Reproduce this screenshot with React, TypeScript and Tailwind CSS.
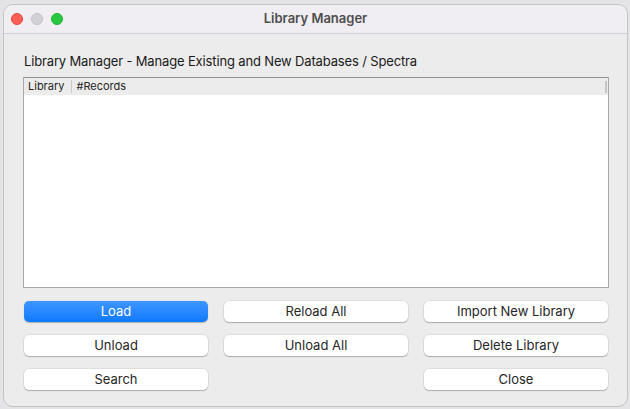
import React from "react";

const sans = { fontFamily: "Inter, 'Liberation Sans', sans-serif" };

function MacButton({ label, primary }: { label: string; primary?: boolean }) {
  if (primary) {
    return (
      <button className="h-[21px] rounded-[5px] bg-gradient-to-b from-[#3d95ff] to-[#0a7aff] text-[13px] text-white leading-none shadow-[0_0.5px_1px_rgba(0,0,0,0.25)]">
        {label}
      </button>
    );
  }
  return (
    <button className="h-[21px] rounded-[5px] bg-white text-[13px] text-[#262626] leading-none shadow-[0_0_0_0.5px_rgba(0,0,0,0.12),0_1px_1px_rgba(0,0,0,0.22)]">
      {label}
    </button>
  );
}

export default function App() {
  return (
    <div className="w-[630px] h-[409px] bg-[#e4e4e6] overflow-hidden" style={sans}>
      <div className="ml-[3px] mt-[4px] w-[625px] h-[403px] rounded-[10px] overflow-hidden bg-[#ececec] border border-[#c4c4c4] flex flex-col">
        <div className="h-[29px] shrink-0 bg-[#f0eef3] border-b border-[#d2d0d6] flex items-center relative">
          <div className="flex gap-[8px] pl-[7px]">
            <span className="w-[12px] h-[12px] rounded-full bg-[#ff5f57] border border-[#e2463f]" />
            <span className="w-[12px] h-[12px] rounded-full bg-[#d2d1d6] border border-[#c1c0c5]" />
            <span className="w-[12px] h-[12px] rounded-full bg-[#28c840] border border-[#1fb233]" />
          </div>
          <div className="absolute inset-0 flex items-center justify-center text-[13px] font-semibold text-[#4d4d4d]">
            Library Manager
          </div>
        </div>
        <div className="pl-[19px] pr-[18px] pt-[19px]">
          <div className="text-[13px] text-[#1a1a1a] leading-[16px] pl-px tracking-[-0.15px]">
            Library Manager - Manage Existing and New Databases / Spectra
          </div>
          <div className="mt-[8px] h-[211px] border border-[#a9a9a9] border-t-[#8e8e8e] bg-white flex flex-col">
            <div className="h-[17px] bg-[#ececec] flex items-center text-[11px] text-[#262626]">
              <span className="pl-[4px] pr-[7px]">Library</span>
              <span className="w-px h-[13px] bg-[#c9c9c9]" />
              <span className="pl-[4px]">#Records</span>
              <span className="ml-auto mr-[1px] w-[2px] h-[12px] bg-[#c4c4c4]" />
            </div>
            <div className="flex-1 bg-white" />
          </div>
          <div className="mt-[13px] grid grid-cols-3 gap-x-[16px] gap-y-[13px] pl-px pr-px">
            <MacButton label="Load" primary />
            <MacButton label="Reload All" />
            <MacButton label="Import New Library" />
            <MacButton label="Unload" />
            <MacButton label="Unload All" />
            <MacButton label="Delete Library" />
            <MacButton label="Search" />
            <div />
            <MacButton label="Close" />
          </div>
        </div>
      </div>
    </div>
  );
}
